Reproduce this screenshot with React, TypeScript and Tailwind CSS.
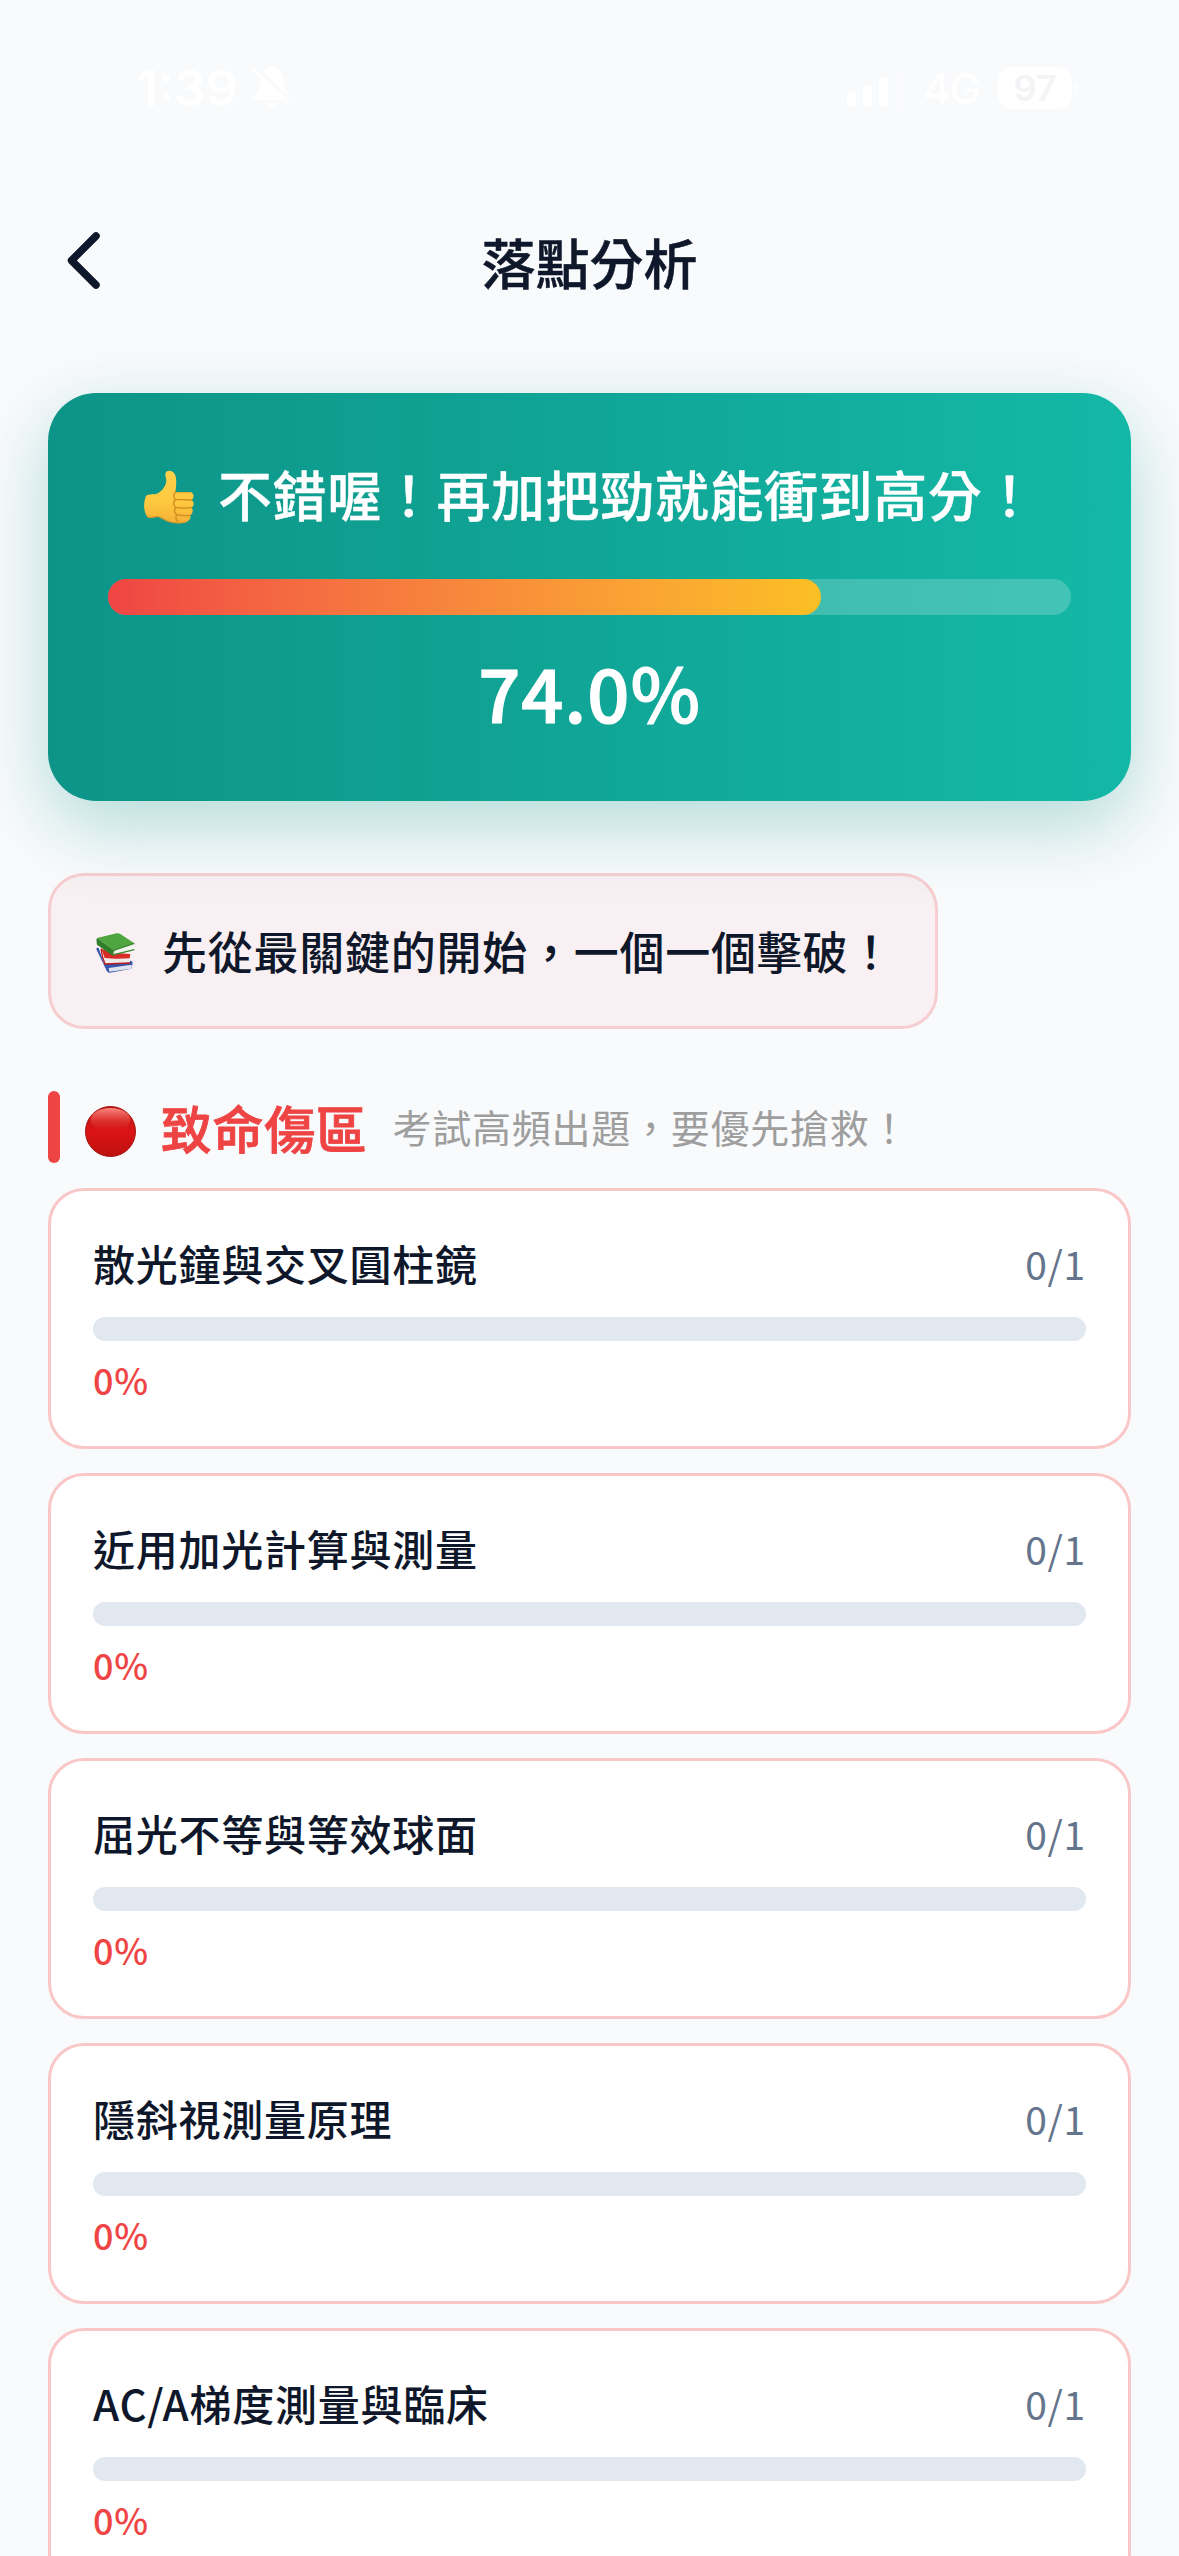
import React from "react";

const topics = ["散光鐘與交叉圓柱鏡", "近用加光計算與測量", "屈光不等與等效球面", "隱斜視測量原理", "AC/A梯度測量與臨床"];

function ThumbsUp() {
  return (
    <svg className="mt-[7px] h-[54px] w-[50px] shrink-0" viewBox="0 0 150 162">
      <defs>
        <linearGradient id="hand" x1="0" y1="0" x2="0" y2="1">
          <stop offset="0" stopColor="#ffd04a" />
          <stop offset="0.6" stopColor="#fec93f" />
          <stop offset="1" stopColor="#f3b035" />
        </linearGradient>
      </defs>
      <path d="M64 12C65 -2 88 -2 94 16C99 32 96 52 94 66L138 66C152 68 151 86 142 90C152 94 151 110 142 113C149 118 147 132 138 136C142 143 137 154 126 157C108 162 84 158 70 152C56 146 48 138 38 140C28 143 18 147 10 140C-2 126 -2 96 6 78C16 70 30 76 42 70C54 62 66 48 67 32C67 24 63 20 64 12Z" fill="url(#hand)" />
      <path d="M94 66C88 72 88 84 94 88L142 90M94 89C87 95 88 108 95 112Q118 116 142 113M95 113C89 119 91 131 98 134Q118 138 138 136M98 136C93 142 96 152 104 156" fill="none" stroke="#cf8a20" strokeWidth="4" strokeLinecap="round" />
      <path d="M97 68H136" stroke="#e6a52e" strokeWidth="3" strokeLinecap="round" />
      <path d="M10 140C20 146 30 138 42 140C54 142 64 156 84 157C100 160 116 160 126 156" fill="none" stroke="#dc9425" strokeWidth="4" strokeLinecap="round" opacity=".75" />
    </svg>
  );
}

function Books() {
  return (
    <svg className="h-[40px] w-[39px] shrink-0" viewBox="50 37 117 120">
      <path d="M51 86Q50 80 58 82L74 128L156 120L160 126L157 144L92 156Q86 157 82 150Z" fill="#3556ae" />
      <path d="M88 142L157 132V144L90 153Z" fill="#dfe2ec" />
      <path d="M66 84L76 112L150 118L153 100L100 96Z" fill="#d92b26" />
      <path d="M74 116L152 113V126L78 130Z" fill="#efeaea" />
      <path d="M66 84Q65 88 70 110L77 130L153 127" fill="none" stroke="#b81c1a" strokeWidth="4" />
      <path d="M53 52L112 38Q118 37 124 41L165 68L104 89Z" fill="#4fa540" />
      <path d="M53 52Q50 56 53 72L98 104L104 89Z" fill="#2f7e29" />
      <path d="M104 90L162 73V86L102 102Z" fill="#f3f3f0" />
      <path d="M165 68L105 88Q98 96 100 103L165 87" fill="none" stroke="#3b8a31" strokeWidth="4" />
    </svg>
  );
}

function RedCircle() {
  return (
    <svg className="h-[51px] w-[51px] shrink-0" viewBox="0 0 51 51">
      <defs>
        <linearGradient id="ball" x1="0" y1="0" x2="0" y2="1">
          <stop offset="0" stopColor="#b81414" />
          <stop offset="0.5" stopColor="#dc1414" />
          <stop offset="1" stopColor="#bd1010" />
        </linearGradient>
        <linearGradient id="shine" x1="0" y1="0" x2="0" y2="1">
          <stop offset="0" stopColor="#ff8a80" />
          <stop offset="1" stopColor="#e02a24" stopOpacity="0" />
        </linearGradient>
      </defs>
      <circle cx="25.500" cy="25.500" r="25" fill="url(#ball)" stroke="#a51212" strokeWidth="1" />
      <ellipse cx="25.500" cy="14" rx="20" ry="12" fill="url(#shine)" />
    </svg>
  );
}

function StatusBar() {
  return (
    <div className="flex h-[177px] items-start justify-between pt-[62px] pl-[137px] pr-[100px] font-['Inter'] text-white">
      <div className="flex items-center">
        <span className="w-[102px] text-[50px] leading-[52px] font-semibold">1:39</span>
        <svg className="ml-[12px] h-[44px] w-[40px]" viewBox="0 0 40 44">
          <path d="M21 0C18 0 17 2 17 3C11 5 9 11 9 17C9 25 3 27 2 32Q2 34 4 34H36Q38 34 38 32C37 27 33 25 33 17C33 11 31 5 25 3C25 2 24 0 21 0ZM15 37Q21 46 27 37Z" fill="white" />
          <path d="M4 0L40 35" stroke="#f9fafc" strokeWidth="3" />
          <path d="M2 3L38 38" stroke="white" strokeWidth="3" strokeLinecap="round" />
        </svg>
      </div>
      <div className="flex h-[52px] items-center">
        <div className="flex h-[38px] items-end gap-[7px]">
          <i className="h-[15px] w-[9px] rounded-[3px] bg-white" />
          <i className="h-[22px] w-[9px] rounded-[3px] bg-white" />
          <i className="h-[30px] w-[9px] rounded-[3px] bg-white" />
          <i className="h-[37px] w-[9px] rounded-[3px] bg-white/30" />
        </div>
        <span className="ml-[19px] w-[58px] text-[42px] font-medium tracking-[-1px]">4G</span>
        <span className="ml-[17px] flex h-[42px] w-[74px] items-center justify-center rounded-[13px] bg-white text-[36px] font-semibold text-[#f3f4f6]">97</span>
        <i className="ml-[3px] h-[13px] w-[4px] rounded-r-full bg-white/50" />
      </div>
    </div>
  );
}

function TopicCard({ name }: { name: string }) {
  return (
    <div className="h-[261px] shrink-0 rounded-[36px] border-[3px] border-[#f9c7c7] bg-white px-[42px] pt-[39px]">
      <div className="flex h-[66px] items-center justify-between">
        <span className="text-[42px] leading-[60px] font-medium tracking-[0.75px] text-[#0f172a]">{name}</span>
        <span className="text-[39px] leading-[60px] tracking-[0.75px] text-[#64748b]">0/1</span>
      </div>
      <div className="mt-[21px] h-6 rounded-full bg-[#e2e8f0]" />
      <div className="mt-[12px] text-[36px] leading-[53px] font-medium tracking-[0.75px] text-[#ef4444]">0%</div>
    </div>
  );
}

export default function App() {
  return (
    <div className="h-[2556px] w-[1179px] overflow-hidden bg-[#f9fafc] font-['Noto_Sans_CJK_TC',sans-serif]">
      <StatusBar />
      <header className="grid h-[168px] grid-cols-[1fr_auto_1fr] items-center px-[60px]">
        <svg className="h-[60px] w-[48px]" viewBox="0 0 48 60">
          <path d="M36 5L11.500 29.500L36 54" fill="none" stroke="#0f172a" strokeWidth="7.500" strokeLinecap="round" strokeLinejoin="round" />
        </svg>
        <h1 className="pt-[2px] text-[54px] leading-[78px] font-medium text-[#0f172a] [-webkit-text-stroke:0.5px]">落點分析</h1>
      </header>
      <main className="flex flex-col px-12 pt-12">
        <section className="flex h-[408px] flex-col rounded-[48px] bg-linear-to-r from-[#0d9488] to-[#14b8a6] px-[60px] pt-[60px] text-white shadow-[0_24px_72px_rgba(13,148,136,0.3)]">
          <div className="flex h-[81px] items-center justify-center pl-[2px]">
            <ThumbsUp />
            <span className="ml-[24px] text-[54px] leading-[78px] font-medium tracking-[0.6px] [-webkit-text-stroke:0.4px]">不錯喔！再加把勁就能衝到高分！</span>
          </div>
          <div className="mt-[45px] h-9 rounded-full bg-white/20">
            <div className="h-full w-[74%] rounded-full bg-linear-to-r from-[#ef4444] to-[#fbbf24]" />
          </div>
          <div className="mt-[23px] text-center text-[74px] leading-[105px] font-medium tracking-[0.9px] [-webkit-text-stroke:1.2px]">74.0%</div>
        </section>
        <div className="mt-[72px] flex h-[156px] w-[890px] items-center rounded-[36px] border-[3px] border-[#ef4444]/20 bg-[#ef4444]/5 pl-[45px]">
          <span className="mt-[3px]"><Books /></span>
          <span className="ml-[27px] text-[45px] leading-[66px] font-medium tracking-[0.75px] text-[#0f172a]">先從最關鍵的開始，一個一個擊破！</span>
        </div>
        <div className="mt-[60px] flex h-[75px] items-center">
          <i className="h-[72px] w-3 rounded-full bg-[#ef4444]" />
          <span className="ml-[25px] flex pt-[10px]"><RedCircle /></span>
          <h2 className="ml-[25px] pt-[2px] text-[51px] leading-[75px] font-medium tracking-[0.6px] text-[#ef4444] [-webkit-text-stroke:0.8px]">致命傷區</h2>
          <span className="ml-[25px] text-[39px] leading-[57px] tracking-[0.75px] text-[#9e9e9e]">考試高頻出題，要優先搶救！</span>
        </div>
        <div className="mt-6 flex flex-col gap-6">
          {topics.map((t) => <TopicCard key={t} name={t} />)}
        </div>
      </main>
    </div>
  );
}
